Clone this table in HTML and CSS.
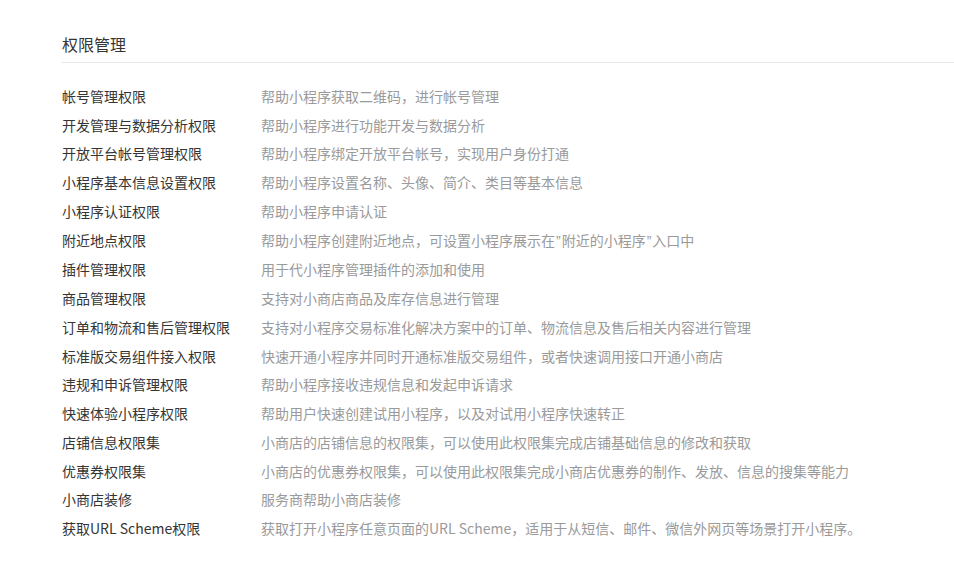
FILE: index.html
```html
<!DOCTYPE html>
<html lang="zh-CN">
<head>
<meta charset="utf-8">
<title>权限管理</title>
<link rel="stylesheet" href="styles.css">
</head>
<body>
<div class="page">
  <h2 class="title">权限管理</h2>
  <ul class="perm-list">
    <li class="perm"><span class="name">帐号管理权限</span><span class="desc">帮助小程序获取二维码，进行帐号管理</span></li>
    <li class="perm"><span class="name">开发管理与数据分析权限</span><span class="desc">帮助小程序进行功能开发与数据分析</span></li>
    <li class="perm"><span class="name">开放平台帐号管理权限</span><span class="desc">帮助小程序绑定开放平台帐号，实现用户身份打通</span></li>
    <li class="perm"><span class="name">小程序基本信息设置权限</span><span class="desc">帮助小程序设置名称、头像、简介、类目等基本信息</span></li>
    <li class="perm"><span class="name">小程序认证权限</span><span class="desc">帮助小程序申请认证</span></li>
    <li class="perm"><span class="name">附近地点权限</span><span class="desc">帮助小程序创建附近地点，可设置小程序展示在<span class="q">”</span>附近的小程序<span class="q">”</span>入口中</span></li>
    <li class="perm"><span class="name">插件管理权限</span><span class="desc">用于代小程序管理插件的添加和使用</span></li>
    <li class="perm"><span class="name">商品管理权限</span><span class="desc">支持对小商店商品及库存信息进行管理</span></li>
    <li class="perm"><span class="name">订单和物流和售后管理权限</span><span class="desc">支持对小程序交易标准化解决方案中的订单、物流信息及售后相关内容进行管理</span></li>
    <li class="perm"><span class="name">标准版交易组件接入权限</span><span class="desc">快速开通小程序并同时开通标准版交易组件，或者快速调用接口开通小商店</span></li>
    <li class="perm"><span class="name">违规和申诉管理权限</span><span class="desc">帮助小程序接收违规信息和发起申诉请求</span></li>
    <li class="perm"><span class="name">快速体验小程序权限</span><span class="desc">帮助用户快速创建试用小程序，以及对试用小程序快速转正</span></li>
    <li class="perm"><span class="name">店铺信息权限集</span><span class="desc">小商店的店铺信息的权限集，可以使用此权限集完成店铺基础信息的修改和获取</span></li>
    <li class="perm"><span class="name">优惠券权限集</span><span class="desc">小商店的优惠券权限集，可以使用此权限集完成小商店优惠券的制作、发放、信息的搜集等能力</span></li>
    <li class="perm"><span class="name">小商店装修</span><span class="desc">服务商帮助小商店装修</span></li>
    <li class="perm"><span class="name">获取URL Scheme权限</span><span class="desc">获取打开小程序任意页面的URL Scheme，适用于从短信、邮件、微信外网页等场景打开小程序。</span></li>
  </ul>
</div>
</body>
</html>
```
FILE: styles.css
```css
html, body {
  margin: 0;
  padding: 0;
  background: #ffffff;
}
body {
  font-family: "Microsoft YaHei", "Noto Sans CJK SC", "Noto Sans", sans-serif;
  color: #353535;
}
.page {
  padding: 32px 0 0 62px;
}
.title {
  margin: 0;
  font-size: 16px;
  font-weight: normal;
  line-height: 24px;
  padding-bottom: 6px;
  border-bottom: 1px solid #e7e7e7;
}
.perm-list {
  list-style: none;
  margin: 19px 0 0 0;
  padding: 0;
}
.perm {
  display: flex;
  font-size: 14px;
  line-height: 28.73px;
  white-space: nowrap;
}
.name {
  width: 199px;
  flex: none;
  color: #353535;
}
.desc {
  color: #9a9a9a;
}
.q {
  font-family: "Liberation Sans", sans-serif;
  padding: 0 1px;
}
```
